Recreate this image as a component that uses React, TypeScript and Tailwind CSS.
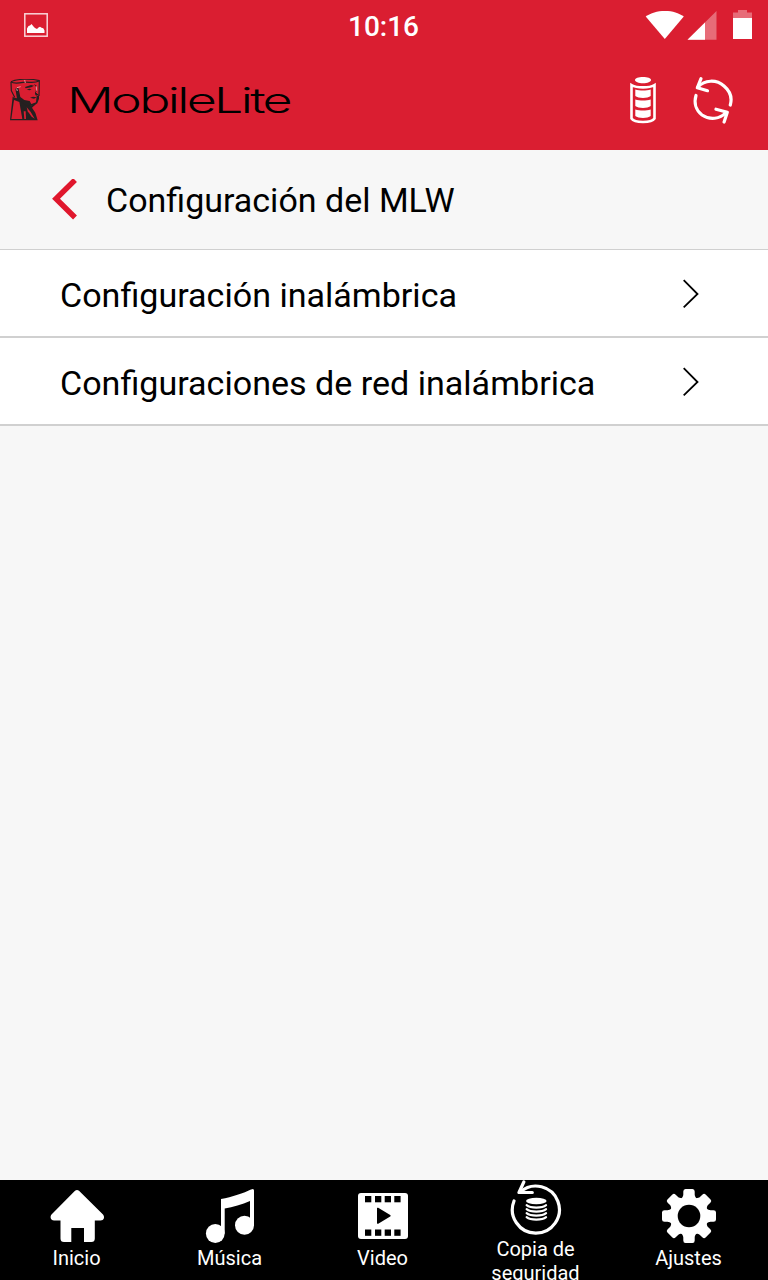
import type { ReactNode } from "react";

function PictureIcon() {
  return (
    <svg width="24" height="24" viewBox="0 0 24 24" className="shrink-0">
      <rect x="0.8" y="0.8" width="22.4" height="22.4" fill="none" stroke="#f9d5d9" strokeWidth="1.5" />
      <path d="M3 20v-4.500L4.500 13l1.500-.6L7.500 11l2 2.400 1.500 1.600 2 1 1.500-1.500 1.500-.8 1.500 1 1.800.6 1.200 2.200V20z" fill="#fff" />
    </svg>
  );
}

function StatusIcons() {
  return (
    <svg width="108" height="32" viewBox="0 0 108 32" className="shrink-0">
      <path d="M0.700 6.500C6 3 12 1 20 1s13.500 2 18.800 5.500L19.800 29z" fill="#fff" />
      <path d="M71.500 1v28.800H42.500z" fill="#fff" fillOpacity="0.35" />
      <path d="M60 12.500v17.300H42.500z" fill="#fff" />
      <path d="M88 8V2.500h5V0h9v2.500h5V8z" fill="#fff" fillOpacity="0.35" />
      <path d="M88 8h19v21H88z" fill="#fff" />
    </svg>
  );
}

function KingstonHead() {
  return (
    <svg width="32" height="44" viewBox="27 21 96 132" className="shrink-0">
      {/* neck and shoulders */}
      <path d="M38 74 30 145H113L106 122 96 107 105 98 110 84 60 66z" fill="#252020" />
      <path d="M42 84 34 141H67L58 90z" fill="#da1e31" />
      <path d="M71 118 73 141H78L77 118z" fill="#da1e31" />
      <path d="M80 106l12 14 12 20-9-6-12-16z" fill="#da1e31" />
      {/* face */}
      <path d="M33 29C50 21 92 19 118 26L117 76l-5 4-4 14-12 7-20-8-20-13-16-4-7-26z" fill="#da1e31" />
      <path
        d="M33 29C50 21 92 19 118 26L117 72M33 29c8 7 20 5 36 2 18-2 34 4 48-4M33 30l1 26 10 20"
        fill="none"
        stroke="#252020"
        strokeWidth="3.500"
      />
      <path d="M46 50l9-3 3 14 3 14 12 9 16 3 5 9 12-2-6 8-24-3-25-19z" fill="#252020" />
      <path d="M110 72l7-2v10l-5 14-12 8-4-6 12-5z" fill="#252020" />
      {/* eyes, nose and mouth */}
      <path d="M75 45l18-6 9 2-8 5-17 3z" fill="#252020" />
      <path d="M80 53l8-3 7 2-6 3z" fill="#252020" />
      <path d="M102 36l8 5v22l6 5-8 3-3-5 2-22z" fill="#252020" />
      <path d="M106 44l2 16 5 5" fill="none" stroke="#da1e31" strokeWidth="3" />
      <path d="M90 77l9-3 11 2-8 4z" fill="#252020" />
      <path d="M74 24l2 9M51 47l11-3M109 43l1 13M50 50l2 7" fill="none" stroke="#f6a9b0" strokeWidth="2.500" />
    </svg>
  );
}

function BatteryIcon() {
  return (
    <svg width="26" height="47" viewBox="0 0 26 47" fill="#fff" className="shrink-0">
      <path d="M5 3c0-1.800 3.500-3 8-3s8 1.200 8 3-3.500 3.200-8 3.200S5 4.800 5 3z" />
      <path d="M1.500 8C7 11.200 19 11.200 24.500 8v33.500c-3 4.700-20 4.700-23 0z" fill="none" stroke="#fff" strokeWidth="2.600" />
      <path d="M5.300 12.500c4.500 1.300 10.900 1.300 15.400 0V19c-3 2.500-12.400 2.500-15.400 0z" />
      <path d="M5.300 22.500c4.500 1.300 10.900 1.300 15.400 0V29c-3 2.500-12.400 2.500-15.400 0z" />
      <path d="M5.300 32.500c4.500 1.300 10.900 1.300 15.400 0V39c-3 2.500-12.400 2.500-15.400 0z" />
    </svg>
  );
}

function SyncIcon() {
  return (
    <svg
      width="42"
      height="48"
      viewBox="0 0 42 48"
      fill="none"
      stroke="#fff"
      strokeWidth="3.200"
      strokeLinecap="round"
      strokeLinejoin="round"
      className="shrink-0"
    >
      <path d="M6 11C12.500 4 24 3 32 10c6.500 5.500 8.300 12 6.300 19" />
      <path d="M9 2.700 5.300 11.800l10.200 2.900" />
      <path d="M4 19.500C1.700 27 4 34.500 10 39c8 5.500 18 4 24-2.500" />
      <path d="M24 33.200l11.300 3-3.200 9.800" />
    </svg>
  );
}

function HomeIcon() {
  return (
    <svg width="56" height="56" viewBox="-0.500 -0.500 56 56">
      <path
        d="M25.500 2.200a3.500 3.500 0 0 1 4 0L53.500 26c2 2.700 1 6-2.500 6h-5.700v18a3.500 3.500 0 0 1-3.500 3.500h-7.300V39.500H21.800v14h-7.300a3.500 3.500 0 0 1-3.500-3.500V32H4.500C1.500 32 0 28.700 2 26z"
        fill="#fff"
      />
    </svg>
  );
}

function MusicIcon() {
  return (
    <svg width="56" height="56" viewBox="0 -0.500 56 56" fill="#fff">
      <path d="M19 10.500C30 8.500 42 4.500 49 1q3-1.500 3 1v35h-4V12.500C40 16 31 18.800 22.700 20v25H19z" />
      <circle cx="13.300" cy="45" r="9.400" />
      <circle cx="42.500" cy="36.800" r="9.500" />
    </svg>
  );
}

function VideoIcon() {
  const holes = [10, 20, 29.7, 39.3];
  return (
    <svg width="56" height="56" viewBox="0 0 56 56">
      <rect x="3" y="5" width="50" height="46" rx="3" fill="#fff" />
      {holes.map((x) => (
        <g key={x}>
          <rect x={x} y="8" width="6.300" height="6.300" />
          <rect x={x} y="41.500" width="6.300" height="6.300" />
        </g>
      ))}
      <path d="M22 20.500v14.500a.8.8 0 0 0 1.200.7l12-7.200a.8.8 0 0 0 0-1.400l-12-7.300a.8.8 0 0 0-1.200.7z" />
    </svg>
  );
}

function BackupIcon() {
  return (
    <svg width="56" height="56" viewBox="-0.300 0.500 56 56" fill="none" stroke="#fff" strokeLinecap="round" strokeLinejoin="round">
      <path d="M12 12.500A23.500 23.500 0 1 1 5.700 21.500" strokeWidth="3.200" />
      <path d="M15.500 2.500 10.700 13H24" strokeWidth="3.200" />
      <ellipse cx="28" cy="21.500" rx="10.300" ry="3.200" fill="#fff" stroke="none" />
      <path
        d="M18.300 25.600c4 3.300 15.500 3.300 19.500 0M18.300 29.600c4 3.300 15.500 3.300 19.500 0M18.300 33.600c4 3.300 15.500 3.300 19.500 0M18.300 37.600c4 3.300 15.500 3.300 19.500 0"
        strokeWidth="2.100"
      />
    </svg>
  );
}

function GearIcon() {
  const angles = [0, 45, 90, 135];
  return (
    <svg width="56" height="56" viewBox="0 0 56 56">
      <g fill="#fff">
        {angles.map((angle) => (
          <path
            key={angle}
            d="M24.500 1h7q2.200 0 2.200 2.500v3c0 3 3 5 5 6v31c-2 1-5 3-5 6v3q0 2.500-2.200 2.500h-7q-2.200 0-2.200-2.500v-3c0-3-3-5-5-6v-31c2-1 5-3 5-6v-3q0-2.500 2.200-2.500z"
            transform={`rotate(${angle} 28 28)`}
          />
        ))}
      </g>
      <circle cx="28" cy="28" r="11.300" fill="#000" />
    </svg>
  );
}

const settings = ["Configuración inalámbrica", "Configuraciones de red inalámbrica"];

const tabs: { label: string; icon: ReactNode; wraps?: boolean }[] = [
  { label: "Inicio", icon: <HomeIcon /> },
  { label: "Música", icon: <MusicIcon /> },
  { label: "Video", icon: <VideoIcon /> },
  { label: "Copia de seguridad", icon: <BackupIcon />, wraps: true },
  { label: "Ajustes", icon: <GearIcon /> },
];

export default function App() {
  return (
    <div className="flex h-[1280px] w-[768px] flex-col overflow-hidden bg-[#f7f7f7] font-['Roboto',sans-serif] text-black">
      <div className="grid h-[50px] shrink-0 grid-cols-3 items-center bg-[#da1e31] pl-6 pr-[15px]">
        <PictureIcon />
        <span className="pt-[3px] pr-[10px] text-center text-[28px] font-medium leading-8 text-white">10:16</span>
        <div className="flex justify-end pt-0.5">
          <StatusIcons />
        </div>
      </div>

      <header className="flex h-[100px] shrink-0 items-center bg-[#da1e31] pl-[9px] pr-[34px]">
        <div className="pt-0.5">
          <KingstonHead />
        </div>
        <svg width="240" height="56" viewBox="0 0 240 56" className="ml-[23px]">
          <text
            x="3"
            y="41"
            fontFamily="Inter, Roboto, sans-serif"
            fontWeight="300"
            fontSize="35"
            letterSpacing="-1.8"
            fill="#000"
            textLength="223"
            lengthAdjust="spacingAndGlyphs"
          >
            MobileLite
          </text>
        </svg>
        <div className="ml-auto flex items-center gap-9">
          <BatteryIcon />
          <SyncIcon />
        </div>
      </header>

      <div className="flex h-[100px] shrink-0 items-center border-b border-[#d0d0d0] pl-[52px]">
        <svg width="26" height="42" viewBox="0 1 26 42" className="shrink-0">
          <path d="M23 2 4 20.700 23 39.500" fill="none" stroke="#e0172d" strokeWidth="5.500" />
        </svg>
        <h1 className="ml-7 text-[34px] leading-10">Configuración del MLW</h1>
      </div>

      <ul className="shrink-0">
        {settings.map((item) => (
          <li key={item} className="flex h-[88px] items-center justify-between border-b-2 border-[#d0d0d0] bg-white pr-[68px] pl-[60px]">
            <span className="pt-1 text-[34.07px] leading-10">{item}</span>
            <svg width="17" height="30" viewBox="0 -1 17 30" className="shrink-0">
              <path d="M0.700 1.200 14.500 15 0.700 28.300" fill="none" stroke="#000" strokeWidth="1.800" />
            </svg>
          </li>
        ))}
      </ul>

      <nav className="mt-auto grid h-[100px] shrink-0 grid-cols-[repeat(5,153px)] overflow-hidden bg-black text-white">
        {tabs.map((tab) => (
          <div key={tab.label} className={`flex flex-col items-center ${tab.wraps ? "" : "pt-2"}`}>
            {tab.icon}
            <span className={`w-28 text-center text-[20px] leading-6 ${tab.wraps ? "pt-px" : "pt-0.5"}`}>{tab.label}</span>
          </div>
        ))}
      </nav>
    </div>
  );
}
